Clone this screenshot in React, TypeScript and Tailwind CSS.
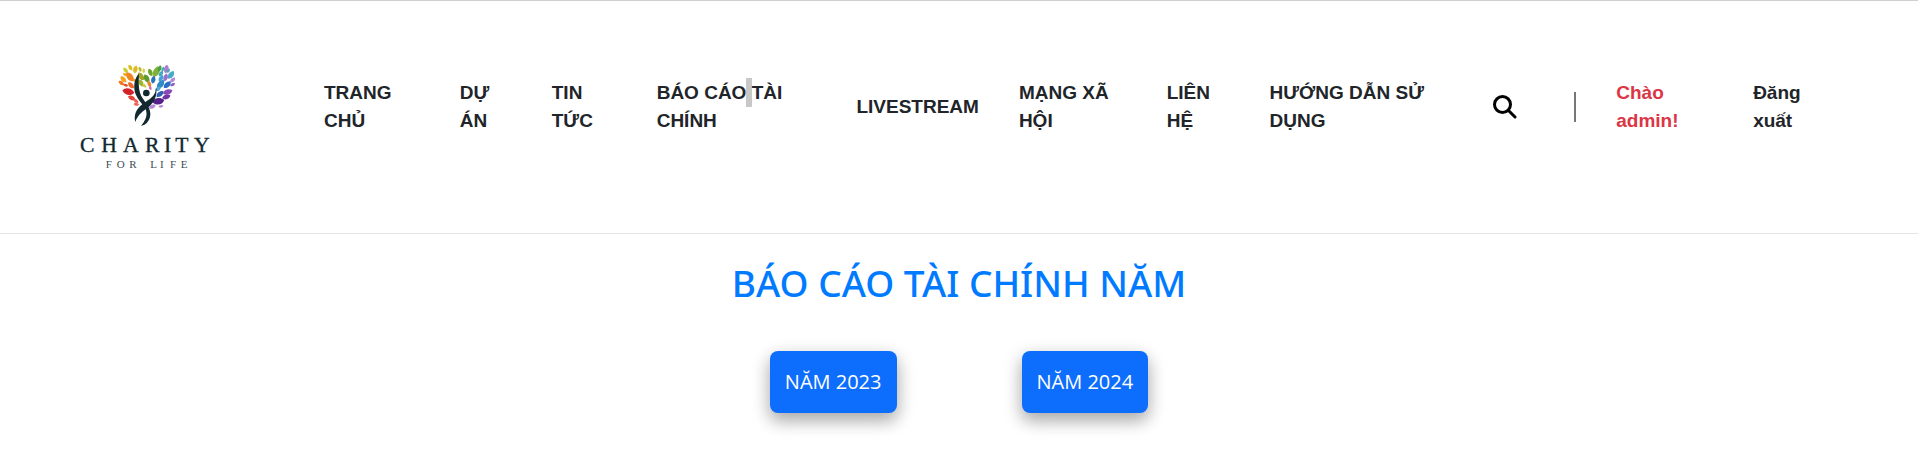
import React from "react";

type Leaf = [number, number, number, number, string];

// cx, cy, angle, length, colour
const leaves: Leaf[] = [
  [211, 53, 65, 20, "#d9c21c"], [197, 61, 50, 20, "#c9cf3a"], [226, 58, 105, 24, "#e0b92a"],
  [240, 58, 75, 16, "#b9b92a"], [251, 62, 95, 15, "#d8d23a"], [196, 74, 25, 16, "#e9a91f"],
  [210, 81, 55, 34, "#f0861f"], [190, 88, 50, 24, "#f3a61f"], [184, 99, 40, 20, "#ef7a22"],
  [197, 106, 20, 15, "#e2502a"], [213, 106, 50, 24, "#ee6a2a"], [225, 92, 70, 13, "#f0a030"],
  [205, 125, 15, 36, "#d3222a"], [215, 144, 28, 24, "#e2463a"], [228, 153, 40, 18, "#ee5f5a"],
  [229, 163, 12, 17, "#e86a5c"], [243, 79, 60, 28, "#a3a626"], [243, 99, 65, 24, "#9ab52c"],
  [260, 86, 65, 28, "#5f9a2c"], [271, 67, 70, 24, "#6ea52e"], [253, 107, 45, 15, "#c6cf3f"],
  [289, 65, -65, 34, "#7fb238"], [299, 56, -70, 20, "#4f9f45"], [280, 89, -75, 24, "#2b74b8"],
  [268, 102, -110, 20, "#e58a34"], [271, 114, -100, 14, "#d06cae"], [303, 71, -50, 20, "#47a9bf"],
  [309, 57, -60, 15, "#3fb0c0"], [319, 57, -75, 26, "#b17ccf"], [325, 62, -55, 15, "#4aa7b4"],
  [317, 82, -70, 24, "#9c70cc"], [333, 75, -50, 28, "#4aa9c9"], [303, 85, -55, 22, "#3fa5d5"],
  [302, 103, -50, 32, "#2f8ac8"], [322, 104, -40, 28, "#2b6fc4"], [338, 90, -40, 20, "#b68ad8"],
  [338, 104, -25, 16, "#8a5fc0"], [294, 117, -30, 20, "#55a7d8"], [323, 126, -15, 30, "#8a49b8"],
  [300, 132, -35, 26, "#2f62b4"], [319, 141, -15, 26, "#6f35a5"], [295, 154, -5, 36, "#55208c"],
  [277, 170, -20, 22, "#b687d8"], [303, 169, -10, 15, "#b687d8"],
];

function Logo() {
  return (
    <svg viewBox="60 45 396 315" className="h-[105px] w-[132px]" role="img" aria-label="Charity for Life">
      {leaves.map(([x, y, a, l, c], i) => (
        <path
          key={i}
          d="M-.5 .03C-.34-.34.18-.36.5-.07C.34.34-.22.38-.5 .03Z"
          fill={c}
          transform={`translate(${x} ${y}) rotate(${a}) scale(${l})`}
        />
      ))}
      <g fill="#12292f">
        <circle cx="259" cy="129" r="10" />
        <path d="M237 71C223 84 218 112 228 135C234 149 245 160 252 169C262 182 262 201 253 213C250 219 247 223 243 228C260 225 272 209 271 190C269 170 256 158 248 145C234 123 236 100 237 71Z" />
        <path d="M288 109C289 129 280 140 265 150C245 163 218 181 226 216C232 198 243 188 257 178C281 162 294 139 288 109Z" />
      </g>
      <text x="60 124 189 255 312 346 402" y="305" fill="#12292f" stroke="#12292f" strokeWidth="1" fontFamily="Liberation Serif, serif" fontSize="65">CHARITY</text>
      <text x="137 170 208 240 271 300 330 362" y="353" fill="#3d4d52" fontFamily="Liberation Serif, serif" fontSize="33">FOR LIFE</text>
    </svg>
  );
}

const before = ["TRANG CHỦ", "DỰ ÁN", "TIN TỨC"];
const after = ["LIVESTREAM", "MẠNG XÃ HỘI", "LIÊN HỆ", "HƯỚNG DẪN SỬ DỤNG"];

export default function App() {
  return (
    <div className="min-h-screen border-t border-[#cfcfcf] bg-white text-[#212529]">
      <header className="flex items-center border-b border-[#e5e5e5] px-20 pt-16 pb-[63px]">
        <a href="#" className="shrink-0"><Logo /></a>
        <nav className="mb-[22px] ml-28 grid flex-1 grid-cols-[96fr_52fr_65fr_160fr_121fr_108fr_63fr_184fr_41fr_2px_97fr_85fr] items-center gap-10 font-['Liberation_Sans',sans-serif] text-[19px] leading-7 font-bold">
          {before.map((t) => <a key={t} href="#">{t}</a>)}
          <a href="#">BÁO CÁO<span className="bg-[#c8c8c8] py-1"> </span>TÀI CHÍNH</a>
          {after.map((t) => <a key={t} href="#">{t}</a>)}
          <button type="button" aria-label="Tìm kiếm" className="w-6">
            <svg viewBox="0 0 24 24" className="size-6" fill="none" stroke="#000" strokeLinecap="round">
              <circle cx="9.5" cy="9.5" r="8" strokeWidth="3" />
              <path d="M15.5 15.5L22 22" strokeWidth="3" />
            </svg>
          </button>
          <span className="h-[30px] w-0.5 bg-[#777]" />
          <a href="#" className="text-[#dc3545]">Chào admin!</a>
          <a href="#">Đăng xuất</a>
        </nav>
      </header>
      <main className="flex flex-col items-center pt-6 font-['Noto_Sans',sans-serif]">
        <h1 className="text-[37px] leading-[50px] font-medium text-[#007bff]">BÁO CÁO TÀI CHÍNH NĂM</h1>
        <div className="mt-[43px] flex gap-[125px]">
          {["NĂM 2023", "NĂM 2024"].map((t) => (
            <button key={t} type="button" className="rounded-lg bg-[#0d6efd] px-[15px] py-4 font-['Open_Sans',sans-serif] text-[20px] leading-[30px] text-white shadow-[0_8px_16px_rgba(0,0,0,0.2),0_6px_20px_rgba(0,0,0,0.19)]">{t}</button>
          ))}
        </div>
      </main>
    </div>
  );
}
